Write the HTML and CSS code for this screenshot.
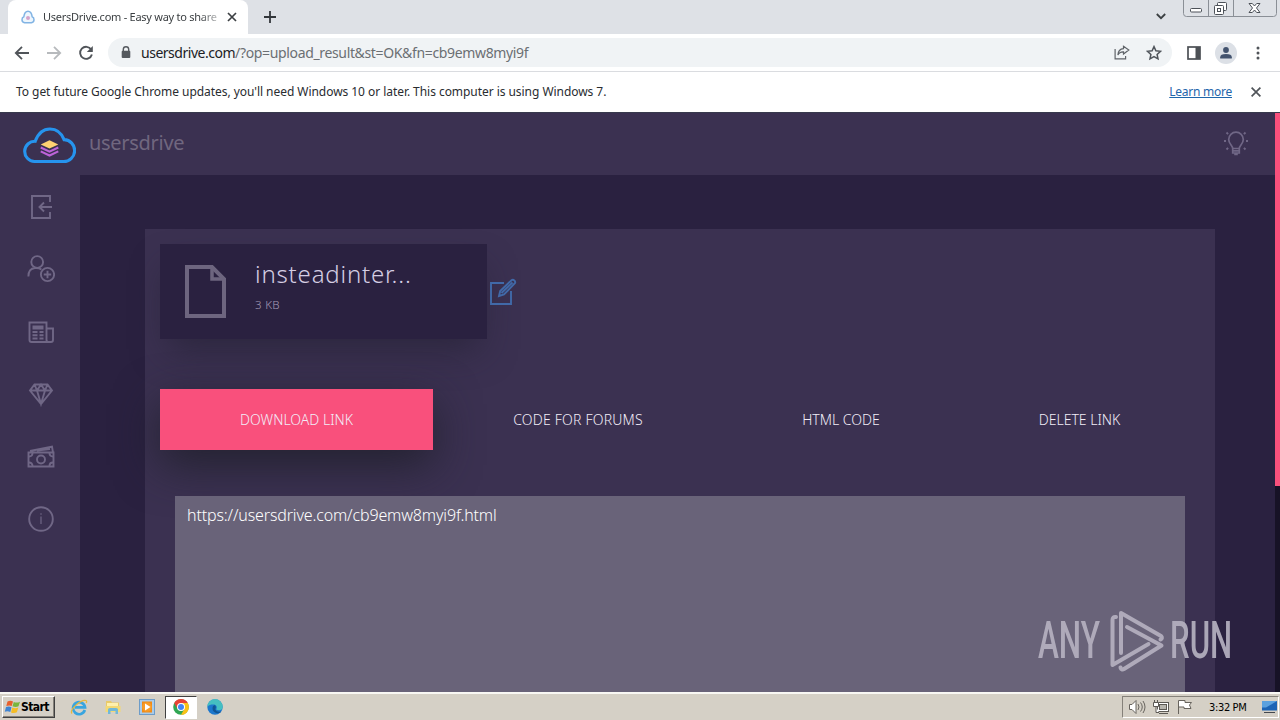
FILE: index.html
```html
<!DOCTYPE html>
<html lang="en">
<head>
<meta charset="utf-8">
<title>UsersDrive.com - Easy way to share</title>
<link rel="stylesheet" href="styles.css">
</head>
<body>
<div class="screen">
  <header class="tabstrip">
    <div class="strip-edge"></div>
    <div class="browser-tab">
      <svg class="favicon" width="14" height="14" viewBox="0 0 14 14"><path d="M3.600 12.800Q1 12.300 1 9.800 1 7.500 2.800 6.800 3.600 1.200 7 1.200t4.200 5.600Q13 7.500 13 9.800q0 2.500-2.600 3z" fill="#eef6fd" stroke="#82b4e4" stroke-width="1.500"/><circle cx="7" cy="8" r="2" fill="#d5a3cb"/></svg>
      <span class="tab-title">UsersDrive.com - Easy way to share</span>
      <svg class="tab-close" width="10" height="10" viewBox="0 0 10 10"><path d="M1 1l8 8M9 1L1 9" stroke="#3c4043" stroke-width="1.7"/></svg>
    </div>
    <svg class="new-tab" width="12" height="12" viewBox="0 0 12 12"><path d="M6 0v12M0 6h12" stroke="#33373b" stroke-width="1.8"/></svg>
    <svg class="tab-search" width="10" height="7" viewBox="0 0 10 7"><path d="M.8 1L5 5.2 9.2 1" fill="none" stroke="#3c4043" stroke-width="1.8"/></svg>
    <svg class="win-controls" width="94" height="17" viewBox="0 0 94 17" fill="none" stroke="#8a8f96"><path d="M.5 0v13.500q0 3 3 3h87q3 0 3-3V0M25.500 0v16M50.500 0v16"/><g stroke="#4c5158"><rect x="7.500" y="8.500" width="11" height="3.500" rx="1" fill="#fff"/><rect x="34.500" y="2.500" width="9" height="8" rx="1" fill="#fff"/><rect x="31.500" y="5.500" width="9" height="9" rx="1" fill="#fff"/><rect x="34.500" y="8.500" width="3" height="3"/><path d="M66 3.500h3.300L71.500 6l2.200-2.500H77L73.500 8l3.500 4.500h-3.300L71.500 10l-2.200 2.500H66L69.500 8z" fill="#fff"/></g></svg>
  </header>

  <nav class="toolbar">
    <svg class="nav-icon" width="16" height="16" viewBox="0 0 16 16" fill="none" stroke="#505459" stroke-width="1.8"><path d="M15 8H2.200M8 1.800L1.800 8 8 14.200"/></svg>
    <svg class="nav-icon" width="16" height="16" viewBox="0 0 16 16" fill="none" stroke="#b7babd" stroke-width="1.800"><path d="M1 8h12.800M8 1.800L14.200 8 8 14.200"/></svg>
    <svg class="nav-icon" width="16" height="16" viewBox="0 0 16 16"><path d="M13.200 4.600A6 6 0 1 0 13.900 9.500" fill="none" stroke="#505459" stroke-width="1.900"/><path d="M14.800 1v6H8.800z" fill="#505459"/></svg>
    <div class="omnibox">
      <svg width="10" height="13" viewBox="0 0 10 13"><path d="M2.300 6V3.500a2.700 2.700 0 0 1 5.400 0V6" fill="none" stroke="#55595e" stroke-width="1.400"/><rect x=".7" y="4.700" width="8.600" height="7.300" rx="1" fill="#55595e"/></svg>
      <span class="url"><span class="url-host">usersdrive.com</span>/?op=upload_result&amp;st=OK&amp;fn=cb9emw8myi9f</span>
      <svg class="share" width="16" height="15" viewBox="0 0 16 15" fill="none" stroke="#5f6368" stroke-width="1.200"><path d="M1.100 4v9.900h10.500V11"/><path d="M9.500 1.300L14.800 5 9.500 9V6.800Q5.500 6.600 3.900 10 4.200 4 9.500 3.600z"/></svg>
      <svg class="star" width="16" height="16" viewBox="0 0 16 16"><path d="M8 1.600l1.900 4.200 4.600.5-3.400 3.100.9 4.500L8 11.600l-4 2.300.9-4.500L1.500 6.300l4.600-.5z" fill="none" stroke="#50555b" stroke-width="1.500"/></svg>
    </div>
    <svg class="side-panel" width="14" height="14" viewBox="0 0 14 14"><rect x="1" y="1" width="12" height="12" fill="#fff" stroke="#4c5055" stroke-width="1.700"/><path d="M8.500 1H13v12H8.500z" fill="#4c5055"/></svg>
    <svg class="avatar" width="22" height="22" viewBox="0 0 22 22"><circle cx="11" cy="11" r="11" fill="#dce0e6"/><circle cx="11" cy="8" r="2.900" fill="#43536e"/><path d="M5.200 16.500v-1.200q0-3.300 5.800-3.300t5.800 3.300v1.200z" fill="#43536e"/></svg>
    <svg class="menu-dots" width="4" height="14" viewBox="0 0 4 14" fill="#505459"><circle cx="2" cy="2" r="1.500"/><circle cx="2" cy="7" r="1.500"/><circle cx="2" cy="12" r="1.500"/></svg>
  </nav>

  <div class="infobar">
    <span class="info-text">To get future Google Chrome updates, you'll need Windows 10 or later. This computer is using Windows 7.</span>
    <span class="learn">Learn more</span>
    <svg width="10" height="10" viewBox="0 0 10 10"><path d="M.6.600l8.800 8.800M9.400.600L.6 9.400" stroke="#505459" stroke-width="1.700"/></svg>
  </div>

  <div class="site">
    <div class="site-view">
      <div class="site-header">
        <svg class="logo" width="53" height="37" viewBox="0 0 54 38"><path d="M11.500 35.400A10 10 0 0 1 12.300 14.700C15.500 6 21 2 27.500 2S39.300 6 42 13a11.200 11.200 0 0 1-.8 22.400z" fill="none" stroke="#2694ee" stroke-width="3.200"/><path d="M18 25l9 4.300 9-4.300M18 21l9 4.300 9-4.300" fill="none" stroke="#bd63d8" stroke-width="2.200"/><path d="M18 18l9-4.300 9 4.300-9 4.200z" fill="#ffd172"/></svg>
        <span class="brand">usersdrive</span>
        <svg class="bulb" width="26" height="26" viewBox="0 0 26 26" fill="none" stroke="#706786" stroke-width="1.700"><path d="M9.700 18.500c0-3-4-4.300-4-9a7.300 7.300 0 0 1 14.600 0c0 4.700-4 6-4 9zM9.700 18.500V23h6.600v-4.500M9.700 20.800h6.600M11.200 24.500h3.600"/><path d="M1 11h2M23 11h2M3.500 2.500l1.600 1.600M22.500 2.500l-1.600 1.600M3.500 19.500l1.600-1.600M22.500 19.500l-1.600-1.600" stroke-width="1.900"/></svg>
      </div>
      <div class="site-body">
        <aside class="sidebar">
          <svg width="28" height="28" viewBox="0 0 28 28"><path d="M23 9V3H5v22h18v-6M25 14H12.500M17 9.500L12.500 14l4.500 4.500"/></svg>
          <svg width="28" height="28" viewBox="0 0 28 28"><circle cx="10.200" cy="7" r="5.900"/><path d="M1.400 21.500q0-8 6.500-8.500 4-.4 6.500 1.500"/><circle cx="20.500" cy="19.500" r="6.600"/><path d="M20.500 15.800v7.400M16.800 19.500h7.400"/></svg>
          <svg width="28" height="28" viewBox="0 0 28 28"><path d="M4.500 24Q2.500 24 2.500 22V4.500h17V22q0 2 2 2zM19.500 10.500H26V22q0 2-2 2H4.500"/><path d="M5.500 9.500h11" stroke-width="4"/><path d="M5.500 14h5M12.500 14h4M5.500 17.300h5M12.500 17.300h4M5.500 20.500h5M12.500 20.500h4" stroke-width="2"/></svg>
          <svg width="28" height="28" viewBox="0 0 28 28"><path d="M7.500 4.500h13l4.500 6L14 24 3 10.500zM3 10.500h22M7.500 4.500l2.500 6L14 24l4-13.500 2.500-6M10 10.500l4-6 4 6"/></svg>
          <svg width="28" height="28" viewBox="0 0 28 28"><path d="M1.500 9.500h25v14h-25zM3 8l22-4.300 1 5.800M10 7.500l13-1.500"/><circle cx="14" cy="16.500" r="4"/><path d="M2 13.500q3.500 0 3.500-3.500M22.500 10q0 3.500 3.500 3.500M2 19.500q3.500 0 3.500 3.500M22.500 23q0-3.500 3.500-3.500"/></svg>
          <svg width="28" height="28" viewBox="0 0 28 28"><circle cx="14" cy="14" r="11.800"/><path d="M14 11.500V19M14 8.300v1.500" stroke-width="1.200"/></svg>
        </aside>
        <main class="content">
          <section class="panel">
            <div class="file-row">
              <div class="file-card">
                <svg class="file-icon" width="42" height="54" viewBox="0 0 42 54" fill="none" stroke="#6d657f" stroke-width="4"><path d="M2 2h25l12 12v37H2z"/><path d="M27 2v12h12" stroke-width="3.500"/></svg>
                <div class="file-text"><span class="file-name">insteadinter...</span><span class="file-size">3 KB</span></div>
              </div>
              <svg class="edit" width="28" height="28" viewBox="0 0 28 28" fill="none" stroke="#4169a8" stroke-width="1.900"><path d="M15 5H2v21h20V13"/><path d="M10 18l1.200-5L22.500 2.200q1.500-1 3 .4 1.200 1.300.4 2.600L15 16.500zM12.500 15L23.500 4.500"/></svg>
            </div>
            <div class="link-tabs">
              <div class="link-tab tab-download"><span>DOWNLOAD LINK</span></div>
              <div class="link-tab tab-forums"><span>CODE FOR FORUMS</span></div>
              <div class="link-tab tab-html"><span>HTML CODE</span></div>
              <div class="link-tab tab-delete"><span>DELETE LINK</span></div>
            </div>
            <div class="link-box"><span>https://usersdrive.com/cb9emw8myi9f.html</span></div>
          </section>
        </main>
      </div>
    </div>
    <div class="scrollbar"><div class="thumb"></div></div>
    <div class="watermark">
      <span class="wm-word wm-any">ANY</span>
      <svg width="56" height="64" viewBox="0 0 56 64" fill="none" stroke="#b5b1c0" stroke-width="4" stroke-linejoin="round" stroke-linecap="round"><path d="M7 8Q3.500 7.500 3.500 11V56L39.500 35"/><path d="M12 44V4L52 27q2 2-.5 3.500"/><path d="M18 18L52.500 36.500 15 60q-2.500 1.500-3.500-1.500"/></svg>
      <span class="wm-word wm-run">RUN</span>
    </div>
  </div>

  <footer class="taskbar">
    <div class="start">
      <svg width="17" height="16" viewBox="0 0 16 16"><path d="M3 2.500q3-1.500 5.500 0L7.200 7Q5 5.800 1.800 7z" fill="#e8602c"/><path d="M9.300 3q2.800 1.300 6.200-.3L14 7.300q-3 1.300-6-.1z" fill="#79b63c"/><path d="M1.500 8Q4.500 6.800 7 8.200L5.800 13Q3 11.500.3 12.700z" fill="#3f84d2"/><path d="M7.800 8.400q3 1.400 6 .1l-1.400 4.800q-3 1.500-5.900.1z" fill="#f5bd25"/></svg>
      <span>Start</span>
    </div>
    <div class="quick">
      <svg width="18" height="18" viewBox="0 0 18 18"><path d="M14.800 12A6 6 0 1 1 15 9.300H5" fill="none" stroke="#39a5df" stroke-width="2.700"/><path d="M2 15.500C-1 12 11 1 16 2.500c1 .5.600 1.800.2 2.500" fill="none" stroke="#e7b83d" stroke-width="1.300"/></svg>
    </div>
    <div class="quick">
      <svg width="18" height="18" viewBox="0 0 18 18"><path d="M2 3h5l1 1.500h7V13H2z" fill="#e9ca69"/><path d="M3 5h11v7H3z" fill="#fff0ad"/><path d="M1.500 8h15v6h-15z" fill="#f3d975"/><path d="M4 16v-4.500q0-1.500 2-1.500h6q2 0 2 1.500V16h-2.500v-3h-5v3z" fill="#72b8d8"/></svg>
    </div>
    <div class="quick">
      <svg width="18" height="18" viewBox="0 0 18 18"><rect x="1.500" y="1.500" width="15" height="15" fill="#a9cbe9" stroke="#6d9cc8"/><rect x="4" y="3.500" width="10" height="11" fill="#f18b16"/><circle cx="9" cy="9" r="4.800" fill="#f79b27"/><path d="M7 5.500v7L12.500 9z" fill="#fff"/></svg>
    </div>
    <div class="quick quick-active">
      <svg width="18" height="18" viewBox="0 0 18 18"><circle cx="9" cy="9" r="7.800" fill="#30a653"/><path d="M2.200 5.100A7.800 7.800 0 0 1 15.800 5.100H9L5.600 11z" fill="#e84235"/><path d="M15.800 5.100A7.800 7.800 0 0 1 9 16.800L12.400 11 9 5.100z" fill="#fbc116"/><circle cx="9" cy="9" r="4" fill="#fff"/><circle cx="9" cy="9" r="3" fill="#4285f4"/></svg>
    </div>
    <div class="quick">
      <svg width="18" height="18" viewBox="0 0 18 18"><circle cx="9" cy="9" r="7.700" fill="#1c77cd"/><path d="M1.300 9A7.700 7.700 0 0 1 16.700 8.500c.3 4-4 4.500-6.500 3 1.500-2.500 0-5-2.700-5S2.500 7 1.300 9z" fill="#45bfc1"/><path d="M7 8q-2 5 3 7 3.500 1 5.500-1.500-5 1-6.200-2 1.500-2.500-.3-4.500z" fill="#105594"/></svg>
    </div>
    <div class="tray">
      <svg width="18" height="16" viewBox="0 0 18 16" fill="#fff" stroke="#68645e"><path d="M1.500 5.500H4l4-4v13l-4-4H1.500z"/><path d="M10 5q2 3 0 6M12.500 3.500q3.500 4.500 0 9M15 2q4 6 0 12" fill="none"/></svg>
      <svg width="18" height="16" viewBox="0 0 18 16" fill="#fff" stroke="#5c5954"><rect x="5.500" y="3.500" width="11" height="9"/><rect x="7.500" y="5.500" width="7" height="5" fill="#b7b5ae"/><path d="M7 14.500h9M2.500 1v3M5.500 1v3M1.500 3.500h5v4h-5zM4 7.500v6h3" /></svg>
      <svg width="18" height="16" viewBox="0 0 18 16" fill="#fff" stroke="#68645e"><path d="M2.500 15V1.500H9v2h6.500L13.500 6l1.500 3.500H8V8H2.500"/></svg>
      <span class="clock">3:32 PM</span>
      <svg width="17" height="14" viewBox="0 0 17 14"><path d="M1 1h15v9.500H1z" fill="#1d64b5"/><path d="M1 1h15L5 7.500H1z" fill="#5ba1df"/><path d="M3 12.500h11" stroke="#43484f"/></svg>
    </div>
  </footer>
</div>
</body>
</html>
```
FILE: styles.css
```css
* { box-sizing: border-box; }
body { margin: 0; font-family: "Noto Sans", sans-serif; overflow: hidden; }
svg { display: block; flex: none; }
span { white-space: nowrap; }
.screen { width: 1280px; height: 720px; display: flex; flex-direction: column; overflow: hidden; }

.tabstrip { height: 34px; flex: none; display: flex; background: #dee1e6; }
.strip-edge { width: 8px; }
.browser-tab { width: 240px; background: #fff; border-radius: 8px 8px 0 0; display: flex; align-items: center; padding: 0 11px 0 13px; }
.tab-title { margin: -1px 0 0 8px; width: 177px; font: 11px "Noto Sans", sans-serif; letter-spacing: -.26px; color: #3c4043; mask-image: linear-gradient(to right, #000 88%, rgba(0, 0, 0, .3) 99%); }
.tab-close { margin-left: 7px; }
.new-tab { margin: 11px 0 0 16px; }
.tab-search { margin: 13px 17px 0 auto; }
.win-controls { margin-right: 3px; }

.toolbar { height: 38px; flex: none; background: #fff; border-bottom: 1px solid #dadce0; display: flex; align-items: center; padding-left: 14px; }
.nav-icon { margin-right: 16px; }
.omnibox { width: 1064px; height: 29px; border-radius: 15px; background: #f0f3f5; display: flex; align-items: center; padding: 0 10px 0 13px; margin-left: -2px; }
.url { margin-left: 10px; font-size: 14px; letter-spacing: -.4px; color: #6b6f73; }
.url-host { color: #202124; letter-spacing: -.48px; }
.url { letter-spacing: -.35px; }
.share { margin-left: auto; }
.star { margin-left: 16px; }
.side-panel { margin-left: 15px; }
.avatar { margin-left: 14px; }
.menu-dots { margin-left: 19px; }

.infobar { height: 40px; flex: none; display: flex; align-items: center; padding: 0 19px 0 16px; background: #fff; font-size: 12px; color: #292c30; }
.info-text { letter-spacing: -.05px; margin-top: -2px; }
.learn { margin: -2px 19px 0 auto; letter-spacing: -.25px; color: #1f66ab; text-decoration: underline; }

.site { flex: 1; display: flex; min-height: 0; position: relative; background: #3b3151; border-top: 1px solid #383a4d; }
.site-view { width: 1275px; display: flex; flex-direction: column; overflow: hidden; }
.site-header { height: 62px; flex: none; display: flex; align-items: center; padding: 0 26px 0 23px; }
.logo { margin-top: 2px; }
.brand { margin: -3px 0 0 13px; color: #70677f; font: 20px "Noto Sans", sans-serif; font-weight: 400; letter-spacing: -.3px; }
.bulb { margin: -2px 0 0 auto; }
.site-body { flex: 1; min-height: 0; display: flex; }
.sidebar { width: 80px; flex: none; padding: 17.500px 0 0 26.500px; display: flex; flex-direction: column; gap: 34.600px; }
.sidebar svg { fill: none; stroke: #706786; stroke-width: 1.900px; }
.content { flex: 1; background: #2a2140; padding: 54px 60px 0 65px; }
.panel { height: 600px; background: #3b3151; padding: 15px; }
.file-row { display: flex; align-items: center; gap: 2px; }
.file-card { width: 327px; height: 95px; background: #2a2140; box-shadow: 0 18px 35px -8px rgba(36, 33, 50, .65); display: flex; align-items: center; padding-left: 25px; }
.file-text { display: flex; flex-direction: column; margin: -11px 0 0 28px; }
.file-name { font: 300 24px/32px "Noto Sans", sans-serif; letter-spacing: .82px; color: #d5cee4; }
.file-size { margin-top: 6px; font: 300 11.500px/18px "Noto Sans", sans-serif; letter-spacing: .3px; color: #a69bb7; }
.link-tabs { margin-top: 50px; height: 61px; display: flex; font-size: 14px; font-weight: 300; color: #f2edf8; }
.link-tab { display: flex; align-items: center; justify-content: center; }
.tab-download { width: 273px; background: #f9507c; box-shadow: 0 15px 45px rgba(30, 30, 41, .85); }
.tab-forums { width: 290px; letter-spacing: .2px; }
.tab-html { width: 236px; }
.tab-delete { width: 241px; }
.link-box { position: relative; margin: 46px 15px 0; height: 300px; background: #696379; padding: 7px 12px; color: #fff; font: 300 16px/24px "Noto Sans", sans-serif; letter-spacing: -.15px; }
.scrollbar { width: 5px; background: #171226; }
.thumb { height: 373px; background: #f9507c; }
.watermark { position: absolute; right: 49px; bottom: 19px; width: 193px; height: 64px; display: flex; align-items: center; color: #b5b1c0; opacity: .92; }
.wm-word { font: 500 52px/50px Roboto, sans-serif; transform-origin: left center; }
.wm-any { width: 71px; transform: scaleX(.605); }
.wm-run { transform: scaleX(.6); width: 60px; margin-left: 5px; }

.taskbar { height: 28px; flex: none; background: #d5d0c6; border-top: 2px solid #f8f7f3; display: flex; align-items: center; padding: 0 1px 0 2px; }
.start { width: 53px; height: 22px; border: 1px solid; border-color: #fff #404040 #404040 #fff; box-shadow: inset -1px -1px #85817a; display: flex; align-items: center; padding-left: 1px; margin-right: 8px; }
.start span { font: bold 12px "DejaVu Sans Condensed", "DejaVu Sans", sans-serif; letter-spacing: -.6px; color: #000; }
.quick { width: 32px; height: 23px; margin-right: 2px; display: grid; place-items: center; }
.quick-active { background: #fff; border: 1px solid; border-color: #404040 #fff #fff #404040; }
.tray { width: 157px; height: 22px; margin-left: auto; border: 1px solid; border-color: #85817a #fff #fff #85817a; display: flex; align-items: center; padding-left: 5px; gap: 6px; }
.clock { margin: 0 2px 0 9px; width: 46px; font: 11px "DejaVu Sans Condensed", "DejaVu Sans", sans-serif; letter-spacing: -.35px; color: #000; }
```
